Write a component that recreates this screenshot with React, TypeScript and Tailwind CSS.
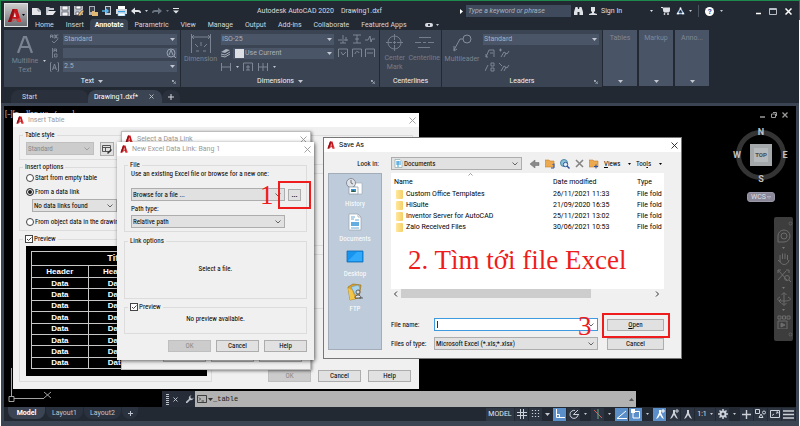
import type { ReactNode } from 'react';
import clsx from 'clsx';

const RIBBON_TABS = ['Home', 'Insert', 'Annotate', 'Parametric', 'View', 'Manage', 'Output', 'Add-ins', 'Collaborate', 'Featured Apps'];
const FOLDERS = [
  { name: 'Custom Office Templates', date: '26/11/2021 11:33' },
  { name: 'HiSuite', date: '21/09/2020 16:35' },
  { name: 'Inventor Server for AutoCAD', date: '25/11/2021 13:02' },
  { name: 'Zalo Received Files', date: '30/06/2021 10:53' },
];
const DATA_ROWS = ['Data', 'Data', 'Data', 'Data', 'Data', 'Data', 'Data', 'Data'];

type Cls = { className?: string };

/* ---------- small shared drawings ---------- */

function Svg({ w, h = w, className, children }: Cls & { w: number; h?: number; children: ReactNode }) {
  return (
    <svg width={w} height={h} viewBox={`0 0 ${w} ${h}`} fill="none" stroke="currentColor" className={clsx('shrink-0', className)}>
      {children}
    </svg>
  );
}

function Caret({ className = 'text-[#c3c8d0]' }: Cls) {
  return <Svg w={5} h={3} className={className}><path d="M0 0h5L2.5 3z" fill="currentColor" stroke="none" /></Svg>;
}

function SmallCaret({ className = 'text-[#c3c8d0]' }: Cls) {
  return <Svg w={3} h={2} className={className}><path d="M0 0h3L1.5 2z" fill="currentColor" stroke="none" /></Svg>;
}

function Chevron({ className = 'text-[#555]' }: Cls) {
  return <Svg w={6} h={4} className={className}><path d="M.5.5 3 3 5.5.5" strokeWidth=".9" /></Svg>;
}

function ALogo({ size }: { size: number }) {
  return (
    <svg width={size} height={size} viewBox="0 0 16 16" className="shrink-0">
      <path d="M1 15 6 1h5l4 14h-4l-1-3.5H6L4.500 15z" fill="#c4161c" />
      <path d="M7 9.500 8.400 4.500 9.600 9.500z" fill="#f6e4e4" />
      <path d="M1 15 6 1h2L4.500 15z" fill="#8f1015" />
      <path d="M4.500 15 14 10l1 5h-4l-1-2.500-3.500 0z" fill="#e03a3a" />
    </svg>
  );
}

function CloseX({ className = 'text-[#777]' }: Cls) {
  return <Svg w={7} className={className}><path d="m.5.5 6 6m0-6-6 6" strokeWidth=".9" /></Svg>;
}

/* ---------- title bar ---------- */

function QuickAccess() {
  return (
    <div className="flex items-center gap-1 pl-1 text-[#e4e6ea]">
      <button aria-label="New"><Svg w={10}><path d="M0 2h6l3 3v4H0z" fill="currentColor" stroke="none" /><path d="M6 2v3h3" stroke="#8a919c" /></Svg></button>
      <button aria-label="Open"><Svg w={10}><path d="M0 9V1h3l1 1h4v2H3z" fill="#bfc4cc" stroke="none" /><path d="M2 5h8L7 9H0z" fill="currentColor" stroke="none" /></Svg></button>
      <button aria-label="Save"><Svg w={10}><path d="M0 0h10v10H0z" fill="#b9bec7" stroke="none" /><path d="M2 0h6v4H2zM2 6h6v4H2z" fill="#f4f4f4" stroke="#4a5260" strokeWidth=".7" /></Svg></button>
      <button aria-label="Save As"><Svg w={10}><path d="M0 0h9v9H0z" fill="#b9bec7" stroke="none" /><path d="M2 0h5v3H2zM2 6h3v3H2z" fill="#fff" stroke="#4a5260" strokeWidth=".7" /><path d="m4 9 4-5 2 1-4 5z" fill="#f0c070" stroke="#5a4630" strokeWidth=".6" /></Svg></button>
      <button aria-label="Open from mobile"><Svg w={10}><path d="M1 0h6v9H1z" fill="#aab0ba" stroke="none" /><path d="M2 1h4v5H2z" fill="#3a4250" stroke="none" /><path d="M4 5h2l1 1h3v4H4z" fill="#e2b874" stroke="none" /></Svg></button>
      <button aria-label="Save to mobile"><Svg w={10}><path d="M3 0h6v9H3z" fill="#c8ccd4" stroke="none" /><path d="M4 1h4v6H4z" fill="#3a4250" stroke="none" /><path d="M0 5h6M4 3l2 2-2 2" stroke="#5ab4ea" strokeWidth="1.4" /></Svg></button>
      <button aria-label="Plot"><Svg w={11} h={10}><path d="M2 0h7v3H2z" fill="#fff" stroke="none" /><path d="M0 3h11v5H0z" fill="#d4d8de" stroke="none" /><path d="M2 5h7v1H2z" fill="#39a0e0" stroke="none" /><path d="M2 7h7v3H2z" fill="#fff" stroke="#69b7e8" strokeWidth=".6" /></Svg></button>
      <button aria-label="Undo"><Svg w={10} h={8}><path d="M0 4 4 .5V3h3c2 0 3 1 3 3H8.500C8.500 5 8 5 7 5H4v2.500z" fill="currentColor" stroke="none" /></Svg></button>
      <SmallCaret />
      <button aria-label="Redo"><Svg w={10} h={8} className="text-[#6b7482]"><path d="M10 4 6 .5V3H3C1 3 0 4 0 6h1.500C1.500 5 2 5 3 5h3v2.500z" fill="currentColor" stroke="none" /></Svg></button>
      <SmallCaret className="text-[#6b7482]" />
      <button aria-label="Customize toolbar"><Svg w={6}><path d="M0 .5h6" /><path d="M0 2.500h6l-3 3z" fill="currentColor" stroke="none" /></Svg></button>
    </div>
  );
}

function TitleBar() {
  return (
    <div className="flex h-4 items-center">
      <div className="w-[229px] shrink-0"><QuickAccess /></div>
      <h1 className="flex grow items-center gap-[7px] text-[#d8dbe0]"><span>Autodesk AutoCAD 2020</span><span>Drawing1.dxf</span></h1>
      <div className="flex items-center gap-[3px]">
        <Svg w={3} h={5} className="text-white"><path d="M0 0v5l3-2.500z" fill="currentColor" stroke="none" /></Svg>
        <input aria-label="Search" placeholder="Type a keyword or phrase" className="h-3 w-[105px] bg-[#3f4a5c] px-0.5 italic text-white placeholder:text-[#aab1bd]" />
      </div>
      <div className="flex w-[225px] shrink-0 items-center pl-[3px] text-[#dfe2e6]">
        <button aria-label="Find" className="mr-[6px]"><Svg w={9} h={8}><path d="M0 5 1.500 0h2l.5 2h1l.5-2h2L9 5v3H5.500V5h-2v3H0z" fill="currentColor" stroke="none" /></Svg></button>
        <button className="flex items-center gap-1"><Svg w={8}><path d="M2 0h4v4L5 5v1l3 1v1H0V7l3-1V5L2 4z" fill="currentColor" stroke="none" /></Svg>Sign In</button>
        <SmallCaret className="mr-2 ml-[28px]" />
        <button aria-label="Store" className="mr-[6px]"><Svg w={9} h={8}><path d="M0 .5h2L3 5h5l1-4H2.500" fill="currentColor" /><circle cx="3.500" cy="7" r=".6" fill="currentColor" /><circle cx="7" cy="7" r=".6" fill="currentColor" /></Svg></button>
        <button aria-label="Autodesk 360" className="mr-1"><Svg w={9} h={8}><path d="m4.500 1.500 3 5h-6z" stroke="#9fc0e8" strokeWidth="1.4" /><path d="M4.500.5v2M1 6.500h2M6 6.500h2" stroke="#fff" strokeWidth="1.5" /></Svg></button>
        <SmallCaret />
        <span className="mx-[6px] h-3 w-px bg-[#4a5362]" />
        <button aria-label="Help" className="mr-[6px] flex size-[9px] items-center justify-center rounded-full bg-white text-[8px] leading-[9px] font-bold text-[#1f4a9c]">?</button>
        <SmallCaret />
        <div className="ml-auto flex items-center gap-2 pr-1 text-white">
          <button aria-label="Minimize"><Svg w={5} h={8}><path d="M0 6.500h5" strokeWidth="1.5" /></Svg></button>
          <button aria-label="Maximize"><Svg w={8} h={7}><path d="M.5.5h7v6h-7zM.5 1.500h7" stroke="#b9bec7" /></Svg></button>
          <button aria-label="Close"><Svg w={7}><path d="m.5.5 6 6m0-6-6 6" strokeWidth="1.5" /></Svg></button>
        </div>
      </div>
    </div>
  );
}

function RibbonTabs() {
  return (
    <nav className="flex h-[11px] items-stretch pl-px text-[#d3d7dd]">
      {RIBBON_TABS.map((tab) => (
        <button key={tab} className={clsx('rounded-t-sm', tab === 'Annotate' ? 'bg-[#3b4453] px-[5px] font-bold text-white' : 'px-[6px]')}>{tab}</button>
      ))}
      <button aria-label="Ribbon display" className="flex items-center gap-[3px] pl-3">
        <span className="flex h-1 w-2 items-center justify-center rounded-xs bg-[#d8dbe0]"><i className="size-0.5 bg-[#3b4453]" /></span>
        <SmallCaret />
      </button>
    </nav>
  );
}

/* ---------- ribbon ---------- */

function RibbonSelect({ label, value, className, children }: Cls & { label: string; value: string; children?: ReactNode }) {
  return (
    <div className={clsx('relative flex h-[11px] items-center bg-[#4a5568] text-[#a8b0bd]', className)}>
      {children}
      <select aria-label={label} className="h-full grow appearance-none px-px opacity-100 outline-none"><option>{value}</option></select>
      <span className="pointer-events-none absolute top-1 right-0.5 flex"><Caret /></span>
    </div>
  );
}

function Panel({ title, className, caret, launcher, children }: Cls & { title: string; caret?: boolean; launcher?: boolean; children: ReactNode }) {
  return (
    <section className={clsx('flex shrink-0 flex-col bg-[#3b4453]', className)}>
      <div className="flex h-[46px] gap-1 px-[3px] pt-1">{children}</div>
      <footer className="relative flex h-[11px] items-center justify-center gap-1 text-[#f0f2f5]">
        {title}
        {caret && <Caret />}
        {launcher && <span className="absolute top-1 right-1"><Svg w={4} className="text-[#aab1bd]"><path d="M0 .5h2M.5 0v2M1 1l2 2M4 1v3H1" strokeWidth=".8" /></Svg></span>}
      </footer>
    </section>
  );
}

function Ghost({ d, w = 11, h = 10, label }: { d: string; w?: number; h?: number; label: string }) {
  return <button aria-label={label} className="text-[#848d9b]"><Svg w={w} h={h}><path d={d} strokeWidth=".9" /></Svg></button>;
}

function CollapsedPanel({ title }: { title: string }) {
  return (
    <button className="flex w-[34px] shrink-0 flex-col items-center justify-between bg-[#4a5467] pt-1 pb-[3px] text-[#7f8896]">
      {title}
      <Caret />
    </button>
  );
}

function Ribbon() {
  return (
    <div className="flex h-[57px] gap-px pl-px leading-[9px]">
      <Panel title="Text" caret launcher className="w-[176px]">
        <button className="relative flex w-[36px] flex-col items-center pt-0.5 text-[#7a8391]">
          <Svg w={16} h={17}><path d="M1 17 7 1h2l6 16M4 11h8" strokeWidth="2.2" /></Svg>
          <span className="pt-1">Multiline<br />Text</span>
          <span className="absolute right-[-3px] bottom-[14px]"><SmallCaret /></span>
        </button>
        <div className="flex w-3 flex-col items-end justify-between pb-1 text-[#848d9b]">
          <Svg w={9} h={10}><path d="M.5 4V1h2v3M.5 2.500h2M4 4V1h1.500v3zM8.500 1h-2v3h2M2 7l2 2 4-4" strokeWidth=".8" /></Svg>
          <Svg w={9} h={10}><path d="M2.500 0v10M4 4V1h2.500v3M4 2.500h2.500M4.500 9V6H7v3z" strokeWidth=".8" /></Svg>
          <Svg w={9} h={10}><path d="M.5 1v8M8.500 1v8M.5.5h1M.5 9.500h1M7.500.5h1M7.500 9.500h1M2.500 8l2-6 2 6M3 6h3" strokeWidth=".9" /></Svg>
        </div>
        <div className="flex grow flex-col gap-[3px] pb-1">
          <RibbonSelect label="Text style" value="Standard" />
          <div className="flex h-[11px] items-center bg-[#4a5568]">
            <input aria-label="Find text" className="h-full w-full min-w-0 grow px-0.5 outline-none" />
            <Svg w={11} h={10} className="text-[#98a1b0]"><circle cx="5" cy="5" r="4" /><path d="m3 7 2-5 2 5M8 8l2 2" /></Svg>
          </div>
          <RibbonSelect label="Text height" value="2.5" />
        </div>
      </Panel>

      <Panel title="Dimensions" caret launcher className="w-[198px]">
        <button className="flex w-[33px] flex-col items-center text-[#7a8391]">
          <Svg w={20} h={19}><path d="M.5 0v19M19.500 0v19M1 3h18M3 1 1 3l2 2M17 1l2 2-2 2M10 8v4M4 10l3 3M16 10l-3 3M5 17h3M12 17h3" /></Svg>
          <span className="pt-0.5">Dimension</span>
        </button>
        <div className="flex w-[117px] flex-col gap-[3px]">
          <RibbonSelect label="Dimension style" value="ISO-25" />
          <div className="flex items-center gap-[3px]">
            <Svg w={9}><path d="m0 3 5-3 4 1-5 3z" fill="#aab1bd" stroke="none" /><path d="m0 5 4 1 5-3M0 7l4 1 5-3" stroke="#aab1bd" /></Svg>
            <RibbonSelect label="Layer" value="Use Current" className="grow"><i className="ml-0.5 size-[9px] shrink-0 bg-[#dcdfe3]" /></RibbonSelect>
          </div>
          <div className="flex items-center gap-1">
            <Ghost label="Linear" d="M.5 1v8M9.500 1v8M.5 5h9" />
            <SmallCaret />
            <Ghost label="Quick" d="M.5 9V1h9v8M5 3v5M3 5h4M3 8h4" />
            <Ghost label="Continue" d="M.5 1v8M5 1v8M9.500 1v8M.5 5h9" />
            <SmallCaret />
          </div>
        </div>
        <div className="grid grid-cols-3 content-start gap-x-[3px] gap-y-1">
          <Ghost label="Break" d="M5 1v8M0 6h4M6 6h4M8 3v4M2 9h6" />
          <Ghost label="Space" d="M1 1h8M1 9h8M5 1v8M3 5h4" />
          <Ghost label="Jog" d="M0 6h3l2-4 1 6 1-3h3" />
          <Ghost label="Check" d="M.5 9V1h9v8M3 4l2 3 3-3" />
          <Ghost label="Update" d="M.5 9V1h9v8M3 6c0-3 4-3 4-1" />
          <Ghost label="Reassociate" d="M.5 9V1h9v8M2 5h6" />
        </div>
      </Panel>

      <Panel title="Centerlines" className="w-[61px]">
        <button className="flex w-1/2 flex-col items-center text-[#747d8b]">
          <Svg w={17}><circle cx="8.500" cy="8.500" r="6.500" /><path d="M8.500 0v6M8.500 7v3M8.500 11v6M0 8.500h6M7 8.500h3M11 8.500h6" /></Svg>
          <span className="pt-[3px]">Center<br />Mark</span>
        </button>
        <button className="flex w-1/2 flex-col items-center text-[#747d8b]">
          <Svg w={19} h={17}><path d="M4 3.500h12M0 8.500h6M8 8.500h3M13 8.500h6M3 13.500h12" /></Svg>
          <span className="pt-[3px]">Centerline</span>
        </button>
      </Panel>

      <Panel title="Leaders" launcher className="w-[160px]">
        <button className="flex w-[34px] flex-col items-center text-[#848d9b]">
          <Svg w={20} h={18}><circle cx="15" cy="5" r="4" /><path d="M11 5H8L2 16M2 12v5l3-2" /></Svg>
          <span className="pt-[3px] text-[#7a8391]">Multileader</span>
        </button>
        <div className="flex grow flex-col gap-[3px]">
          <RibbonSelect label="Leader style" value="Standard" />
          <div className="grid grid-cols-[12px_12px] gap-x-0.5 gap-y-1 pl-0.5">
            <Ghost label="Align" d="M1 9 4 2h5v7M5 5h3M1 6v3h2" />
            <Ghost label="Add leader" d="M0 2h3M1.500.5v3M2 9l3-5 3 2 2-3M5 9l2-4" />
            <Ghost label="Collect" d="M0 9 3 3M6 1h3v3H6zM6 6h3v3H6z" />
            <Ghost label="Remove leader" d="M0 1l3 3M2 9l3-5 3 2 2-3M5 9l2-4" />
          </div>
        </div>
      </Panel>
      <div className="flex gap-0.5 pb-px">
        <CollapsedPanel title="Tables" />
        <CollapsedPanel title="Markup" />
        <CollapsedPanel title="Anno..." />
      </div>
    </div>
  );
}

/* ---------- dialog pieces ---------- */

function Dialog({ title, muted, className, children }: Cls & { title: string; muted?: boolean; children?: ReactNode }) {
  return (
    <section role="dialog" aria-label={title} className={clsx("absolute flex flex-col bg-[#f0f0f0] font-['Roboto_Condensed'] text-black", className)}>
      <header className="flex h-[14px] shrink-0 items-center gap-1 bg-white px-[3px]">
        <ALogo size={8} />
        <h2 className={clsx("grow font-['Roboto']", muted ? 'text-[#9a9a9a]' : 'text-black')}>{title}</h2>
        <button aria-label={`Close ${title}`}><CloseX className={muted ? 'text-[#999]' : 'text-[#222]'} /></button>
      </header>
      {children}
    </section>
  );
}

function Group({ title, className, children }: Cls & { title?: ReactNode; children?: ReactNode }) {
  return (
    <fieldset className={clsx('min-w-0 border border-[#dcdcdc] px-[6px]', className)}>
      {title && <legend className="-ml-[3px] px-0.5">{title}</legend>}
      {children}
    </fieldset>
  );
}

function WinButton({ children, disabled, className = 'h-3 w-[43px]' }: Cls & { children: ReactNode; disabled?: boolean }) {
  return (
    <button disabled={disabled} className={clsx('shrink-0 border', className, disabled ? 'border-[#bfbfbf] bg-[#cccccc] text-[#8a8a8a]' : 'border-[#adadad] bg-[#e1e1e1] text-black')}>
      {children}
    </button>
  );
}

function WinSelect({ label, value, disabled, className, children }: Cls & { label: string; value: string; disabled?: boolean; children?: ReactNode }) {
  return (
    <div className={clsx('relative flex h-[13px] items-center border px-px', disabled ? 'border-[#bfbfbf] bg-[#cccccc] text-[#888]' : 'border-[#adadad] bg-[#e1e1e1]', className)}>
      {children}
      <select aria-label={label} disabled={disabled} className="h-full w-full min-w-0 appearance-none opacity-100 outline-none"><option>{value}</option></select>
      <span className="pointer-events-none absolute top-1 right-[3px] flex"><Chevron className={disabled ? 'text-[#999]' : 'text-[#555]'} /></span>
    </div>
  );
}

function Radio({ label, checked }: { label: string; checked?: boolean }) {
  return (
    <label className="flex items-center gap-px whitespace-nowrap">
      <input type="radio" name="insert" defaultChecked={checked} className="size-2 shrink-0 appearance-none rounded-full border border-[#444] bg-white checked:bg-[#222] checked:shadow-[inset_0_0_0_1px_white]" />
      {label}
    </label>
  );
}

function PreviewCheck() {
  return (
    <label className="flex items-center gap-px">
      <span className="relative flex size-2">
        <input type="checkbox" defaultChecked className="size-2 appearance-none border border-[#444] bg-white" />
        <span className="pointer-events-none absolute inset-0"><Svg w={8}><path d="m2 4 1.500 1.500L6.500 2.500" stroke="#333" strokeWidth=".9" /></Svg></span>
      </span>
      Preview
    </label>
  );
}

/* ---------- dialogs ---------- */

function InsertTableDialog() {
  return (
    <Dialog title="Insert Table" muted className="top-[7px] left-[9px] h-[276px] w-[406px]">
      <div className="flex grow px-[6px] pt-1">
        <div className="w-[193px]">
          <Group title="Table style" className="h-[29px]">
            <div className="flex gap-[6px] pt-[3px]">
              <WinSelect label="Table style" value="Standard" disabled className="w-[68px]" />
              <button aria-label="Edit table style" className="flex h-[14px] w-[14px] items-center justify-center border border-[#adadad] bg-[#e1e1e1]">
                <Svg w={10}><path d="M.5 1.500h8v6h-8zM.5 3.500h8M3.500 3.500v4" stroke="#555" /><path d="m5 9 4-4 1 1-4 4z" fill="#333" stroke="none" /></Svg>
              </button>
            </div>
          </Group>
          <Group title="Insert options" className="mt-[3px] h-[68px]">
            <div className="flex flex-col gap-[6px] pt-[3px]">
              <Radio label="Start from empty table" />
              <Radio label="From a data link" checked />
            </div>
            <WinSelect label="Data link" value="No data links found" className="mt-[3px] ml-[6px] w-[85px]" />
            <div className="pt-[6px]"><Radio label="From object data in the drawing (Data Extraction)" /></div>
          </Group>
          <Group title={<PreviewCheck />} className="mt-1 h-[147px] px-[5px] pt-[3px]">
            <div className="h-[130px] w-[181px] bg-black p-[5px] font-['Liberation_Sans'] text-[8px] font-bold text-white">
              <table className="h-[118px] w-full table-fixed border-collapse text-center leading-[9px] [&_td]:border [&_td]:border-[#c8c8c8] [&_td]:p-0 [&_th]:border [&_th]:border-[#c8c8c8] [&_th]:p-0">
                <thead>
                  <tr className="h-[14px] text-[9px]"><th colSpan={3}>Title</th></tr>
                  <tr className="h-3"><th>Header</th><th>Header</th><th>Header</th></tr>
                </thead>
                <tbody>
                  {DATA_ROWS.map((cell, i) => <tr key={i}><td>{cell}</td><td>{cell}</td><td>{cell}</td></tr>)}
                </tbody>
              </table>
            </div>
          </Group>
        </div>
        <div className="flex grow flex-col gap-2 pt-1">
          <Group className="h-[30px]" />
          <Group className="h-[73px]" />
          <Group className="h-[55px]" />
          <div className="mt-auto flex justify-end gap-[7px] px-0.5 pb-[7px]">
            <WinButton disabled>OK</WinButton>
            <WinButton>Cancel</WinButton>
            <WinButton>Help</WinButton>
          </div>
        </div>
      </div>
    </Dialog>
  );
}

function SelectLinkDialog() {
  return (
    <Dialog title="Select a Data Link" muted className="top-[25px] left-[117px] h-[239px] w-[190px] border border-[#bdbdbd] shadow-[1px_1px_3px_rgba(0,0,0,0.5)]">
      <div className="mt-auto flex justify-end gap-[5px] px-2 pb-[7px]">
        <WinButton>OK</WinButton>
        <WinButton>Cancel</WinButton>
        <WinButton>Help</WinButton>
      </div>
    </Dialog>
  );
}

function NewLinkDialog() {
  return (
    <Dialog title="New Excel Data Link: Bang 1" muted className="top-[36px] left-[113px] h-[218px] w-[197px] shadow-[1px_1px_4px_rgba(0,0,0,0.6)]">
      <div className="flex grow flex-col px-[7px] pt-[5px]">
        <Group title="File" className="h-[71px] pr-[5px]">
          <p className="pt-px">Use an existing Excel file or browse for a new one:</p>
          <div className="flex items-center gap-[3px] pt-[10px]">
            <WinSelect label="File" value="Browse for a file ..." className="w-[154px]" />
            <WinButton className="h-3 w-[13px] leading-[8px] font-bold">...</WinButton>
          </div>
          <p className="pt-1 pb-0.5">Path type:</p>
          <WinSelect label="Path type" value="Relative path" className="w-[154px]" />
        </Group>
        <Group title="Link options" className="mt-[5px] h-[62px]"><p className="pt-5 text-center">Select a file.</p></Group>
        <Group title={<PreviewCheck />} className="mt-1 h-[31px]"><p className="pt-1 text-center">No preview available.</p></Group>
        <div className="flex justify-end gap-[5px] pt-[6px]">
          <WinButton disabled>OK</WinButton>
          <WinButton>Cancel</WinButton>
          <WinButton>Help</WinButton>
        </div>
      </div>
    </Dialog>
  );
}

function PlaceIcon({ name }: { name: string }) {
  if (name === 'History') return (
    <Svg w={18} h={18}>
      <path d="M8 5h8v11h-5z" fill="#fff" stroke="#9aa5b0" strokeWidth=".6" /><circle cx="5" cy="5" r="4.500" fill="#dfe3e8" stroke="#858f9a" />
      <path d="M5 5V2M5 5l2 1" stroke="#555" strokeWidth=".8" /><path d="M3 9h9v7H3z" fill="#fff" stroke="#8895a5" strokeWidth=".7" /><path d="M5 11h5v3H5z" fill="#3a92cf" stroke="none" /><path d="M5 14l2-2 3 2z" fill="#305f46" stroke="none" />
    </Svg>
  );
  if (name === 'Documents') return (
    <Svg w={18} h={18}>
      <path d="M3 1h9l3 3v13H3z" fill="#fff" stroke="#9aa5b0" strokeWidth=".7" /><path d="M5 4h4M5 6h3M9 7h4M5 15h8" stroke="#6da9d6" /><path d="M5 9h8v4H5z" fill="#65ade0" stroke="none" /><path d="M12 1v3h3" stroke="#9aa5b0" strokeWidth=".7" />
    </Svg>
  );
  if (name === 'Desktop') return <Svg w={18} h={18}><path d="M1 3h16v11H1z" fill="#1994ee" stroke="#0c6cb8" strokeWidth=".8" /><path d="m2 13 9-9h5v9z" fill="#32aafb" stroke="none" /></Svg>;
  return (
    <Svg w={18} h={18}>
      <path d="m2 4 5-3 8 1-2 13-9 2z" fill="#d9a430" stroke="#9c7420" strokeWidth=".7" /><path d="m5 4 7-2 2 3-4 8z" fill="#a8d4ee" stroke="#6c93ac" strokeWidth=".6" />
      <path d="m2 5 4 2 3 9-5 1z" fill="#f2c648" stroke="none" /><circle cx="12" cy="9" r="2" stroke="#444" fill="#ddd" strokeWidth=".8" /><path d="M9 15c0-4 6-4 6 0zM13 15h4" stroke="#444" fill="#e5e5e5" strokeWidth=".8" />
    </Svg>
  );
}

function SaveAsDialog() {
  return (
    <Dialog title="Save As" className="top-[31px] left-[319px] h-[222px] w-[359px] border border-[#777]">
      <div className="flex h-[22px] items-center px-[6px] pt-0.5">
        <span className="w-[49px] text-right">Look in:</span>
        <WinSelect label="Look in" value="Documents" className="ml-3 w-[131px]">
          <Svg w={9} className="mx-px"><path d="M1 .5h5l2 2v6H1z" fill="#fff" stroke="#8aa" strokeWidth=".7" /><path d="M2 3h5M2 5h5M4 2v6" stroke="#2f9ad8" /></Svg>
        </WinSelect>
        <div className="ml-2 flex items-center gap-[5px]">
          <button aria-label="Back"><Svg w={10}><path d="M0 5 5 1v2.500h4v3H5V9z" fill="#8a8a8a" stroke="#666" strokeWidth=".5" /></Svg></button>
          <button aria-label="Up one level"><Svg w={10}><path d="M0 1h4l1 1h4v6H0z" fill="#eda94f" stroke="#c9822c" strokeWidth=".6" /><path d="M6 9h3V5M7.500 6 9 4.500" stroke="#2a52a0" /></Svg></button>
          <button aria-label="Search the Web"><Svg w={10}><circle cx="4" cy="4" r="3.500" fill="#8cc1d9" stroke="#4c87a4" /><circle cx="5.500" cy="5.500" r="2.200" fill="#dceefa" stroke="#315a9a" /><path d="m7 7 2.500 2.500" stroke="#2a52a0" strokeWidth="1.4" /></Svg></button>
          <button aria-label="Delete"><Svg w={9}><path d="m1 1 7 7m0-7L1 8" stroke="#858585" strokeWidth="1.6" /></Svg></button>
          <button aria-label="Create folder"><Svg w={10}><path d="M0 1h4l1 1h4v6H0z" fill="#eda94f" stroke="#c9822c" strokeWidth=".6" /><path d="M5 7.500h4M7 5.500v4" stroke="#2a52a0" /></Svg></button>
          <button className="flex w-[27px] items-center justify-between"><span><u>V</u>iews</span><SmallCaret className="text-black" /></button>
          <button className="flex w-[26px] items-center justify-between"><span>Too<u>l</u>s</span><SmallCaret className="text-black" /></button>
        </div>
      </div>
      <div className="flex grow gap-[9px] px-1 pb-2">
        <nav className="flex w-[54px] shrink-0 flex-col gap-[5px] border border-[#a2adb9] bg-[#bdcbda] pt-1">
          {['History', 'Documents', 'Desktop', 'FTP'].map((p) => (
            <button key={p} className="flex flex-col items-center gap-1 text-white"><PlaceIcon name={p} />{p}</button>
          ))}
        </nav>
        <div className="flex grow flex-col">
          <div className="relative mr-[13px] h-[116px] overflow-hidden bg-white pt-[3px] font-['Roboto']">
            <span className="absolute top-0 left-[77px]"><Svg w={5} h={3} className="text-[#777]"><path d="m.5 2.500 2-2 2 2" strokeWidth=".7" /></Svg></span>
            <table className="w-full table-fixed text-left leading-[11px] [&_td]:p-0 [&_th]:p-0 [&_th]:font-normal">
              <colgroup><col className="w-[158px]" /><col className="w-[84px]" /><col /></colgroup>
              <thead><tr className="h-[13px]"><th><span className="pl-[3px]">Name</span></th><th><span className="pl-1">Date modified</span></th><th><span className="pl-1">Type</span></th></tr></thead>
              <tbody>
                {FOLDERS.map((f) => (
                  <tr key={f.name} className="whitespace-nowrap">
                    <td>
                      <span className="flex items-center gap-[3px] pl-[5px]">
                        <i className="h-[9px] w-[7px] rounded-[1px] bg-linear-to-r from-[#ffe79b] to-[#f5d069]" />
                        {f.name}
                      </span>
                    </td>
                    <td><span className="pl-1">{f.date}</span></td>
                    <td><span className="pl-1">File fold</span></td>
                  </tr>
                ))}
              </tbody>
            </table>
          </div>
          <div className="mr-[13px] flex h-[9px] items-center bg-[#f0f0f0]">
            <Svg w={10} h={6}><path d="M6 .5 3.500 3 6 5.500" stroke="#333" /></Svg>
            <i className="h-full w-[190px] bg-[#cdcdcd]" />
            <Svg w={6} className="ml-auto mr-[3px]"><path d="M1 .5 3.500 3 1 5.500" stroke="#333" /></Svg>
          </div>
          <div className="grid grid-cols-[37px_164px_57px] items-center gap-x-[6px] gap-y-[6px] pt-5">
            <label htmlFor="file-name">File name:</label>
            <div className="relative h-[13px] border border-[#3f9be0] bg-white">
              <input id="file-name" className="h-full w-full px-1 outline-none" />
              <i className="absolute top-0.5 left-0.5 h-[7px] w-px bg-[#333]" />
              <span className="pointer-events-none absolute top-1 right-[3px] flex"><Chevron /></span>
            </div>
            <WinButton className="ml-[3px] h-3 w-[57px]"><u>O</u>pen</WinButton>
            <span className="whitespace-nowrap">Files of type:</span>
            <WinSelect label="Files of type" value='Microsoft Excel (*.xls;*.xlsx)' />
            <WinButton className="ml-[3px] h-3 w-[57px]">Cancel</WinButton>
          </div>
        </div>
      </div>
    </Dialog>
  );
}

/* ---------- drawing area ---------- */

function ViewCube() {
  return (
    <div className="absolute top-5 right-0 w-[70px]">
      <svg width="70" height="66" viewBox="0 0 70 66" className="font-['Roboto'] text-[9px] font-bold">
        <circle cx="35" cy="29" r="22.500" fill="none" stroke="#343434" strokeWidth="5" />
        <rect x="24" y="18" width="22" height="22" fill="#a4a8aa" />
        <rect x="28" y="22" width="14" height="14" fill="#b6babc" />
        <text x="35" y="31" textAnchor="middle" fill="#454b50" className="text-[6px]">TOP</text>
        <g fill="#c2c2c2" textAnchor="middle"><text x="35" y="9">N</text><text x="35" y="56">S</text><text x="11" y="32">W</text><text x="59" y="32">E</text></g>
      </svg>
      <button className="mx-auto flex h-[10px] w-[28px] items-center justify-between rounded-[3px] border border-[#9a97a8] bg-[#8a8798] px-[3px] text-[#dedee4]">WCS<Svg w={4} h={3} className="text-[#c5c3cf]"><path d="M0 .5h4l-2 2z" strokeWidth=".6" /></Svg></button>
    </div>
  );
}

function NavBar() {
  return (
    <div className="absolute top-[111px] right-[3px] flex h-[124px] w-[19px] flex-col items-center justify-between rounded-xs bg-[#3d3d3d] py-1 text-[#6c6c6c]">
      <Svg w={5} className="self-end"><circle cx="2.500" cy="2.500" r="1.500" strokeWidth=".7" /></Svg>
      <Svg w={14}><path d="M1 13V7a6 6 0 1 1 6 6z" /><circle cx="7" cy="7" r="3" /></Svg>
      <SmallCaret className="text-[#777]" />
      <Svg w={14}><path d="M3 8V3M5.500 7V1.500M8 7V1.500M10.500 8V3M3 8c0 6 8 6 9 0M3 10 1 8" /></Svg>
      <Svg w={14}><path d="m1 1 9 10M1 11 9 2M1 4V1h3M9 1h3v3" /><circle cx="10" cy="9" r="2.500" /><path d="m12 11 2 2" /></Svg>
      <SmallCaret className="text-[#777]" />
      <Svg w={14}><path d="M7 1v12M4.500 3 7 .5 9.500 3M4.500 11 7 13.500 9.500 11M3 5C-1 7 0 9 7 9s8-2 4-4M4 7 2 9l2 2" /></Svg>
      <SmallCaret className="text-[#777]" />
      <Svg w={14}><path d="M1 1h3v3H1zM5.500 1h3v3h-3zM10 1h3v3h-3zM1 6h9v8H1z" /><path d="m4 8 4 2-4 2z" fill="currentColor" /></Svg>
      <Svg w={5} className="self-end"><circle cx="2.500" cy="2.500" r="1.500" strokeWidth=".7" /></Svg>
    </div>
  );
}

function Canvas() {
  return (
    <main className="relative grow overflow-hidden bg-black">
      <p className="absolute top-[5px] left-px text-[#cfcfcf]">[−][Top][2D Wireframe]</p>
      <div className="absolute top-[6px] right-2 flex gap-[5px] text-[#9a9a9a]">
        <Svg w={6}><path d="M0 5h5" strokeWidth="1.5" /></Svg>
        <Svg w={6}><path d="M.5 2h4v3.500h-4zM2 .5h3.500V4" /></Svg>
        <Svg w={6}><path d="m.5.5 5 5m0-5-5 5" strokeWidth="1.3" /></Svg>
      </div>
      <ViewCube />
      <NavBar />
      <div className="absolute bottom-[3px] left-[3px] text-[#b5b5b5]">
        <Svg w={46} h={36}><path d="M4.500 0v28M7 30.500h30M2 28.500h5v5H2zM37 24l7 6m0-6-7 6" strokeWidth=".9" /></Svg>
      </div>
      <div className="absolute right-[160px] bottom-0 left-[158px] flex h-4 items-center bg-[#b2b2b2] font-['Liberation_Mono'] text-[#222]">
        <div className="flex h-full w-[33px] shrink-0 items-center gap-1 bg-[#272d38] pl-1 text-[#bfc4cc]">
          <Svg w={3} h={11}><path d="M1.500 0v11" strokeWidth="3" strokeDasharray="1 1" /></Svg>
          <Svg w={5}><path d="m.5.5 4 4m0-4-4 4" /></Svg>
          <Svg w={8} className="ml-1"><path d="m0 8 4-4" strokeWidth="1.7" /><path d="M7.500 2.500 6 4 4 2 5.500.5A2.500 2.500 0 0 0 3 4l1 1a2.500 2.500 0 0 0 3.500-2.500z" fill="currentColor" stroke="none" /></Svg>
        </div>
        <Svg w={10} h={8} className="mr-px ml-0.5"><path d="M.5.5h9v7h-9zM2 2.500 3.500 4 2 5.500M4.500 6H7" strokeWidth=".8" /></Svg>
        <Caret className="text-[#333]" />
        <input aria-label="Command line" defaultValue="_table" className="min-w-0 grow outline-none" />
        <Svg w={5} h={3} className="mr-0.5 text-[#555]"><path d="M0 3h5L2.500 0z" fill="currentColor" stroke="none" /></Svg>
      </div>
      <InsertTableDialog />
      <SelectLinkDialog />
      <NewLinkDialog />
      <SaveAsDialog />
      <div className="pointer-events-none font-['Liberation_Serif'] text-[27px] leading-7 text-[#ee1c1c]">
        <span className="absolute top-[75px] left-[274px] h-[28px] w-[33px] border-2" />
        <span className="absolute top-[75px] left-[256px]">1</span>
        <span className="absolute top-[140px] left-[404px] whitespace-nowrap">2. Tìm tới file Excel</span>
        <span className="absolute top-[206px] left-[574px]">3</span>
        <span className="absolute top-[207px] left-[598px] h-[25px] w-[68px] border-2" />
      </div>
    </main>
  );
}

/* ---------- status bar ---------- */

function Tool({ label, on, children }: { label: string; on?: boolean; children: ReactNode }) {
  return <button aria-label={label} className={clsx('flex h-[13px] w-[13px] items-center justify-center', on ? 'bg-[#5b8fca] text-white' : 'bg-[#2c3442] text-[#cdd1d8]')}>{children}</button>;
}

function Person({ mark }: { mark?: string }) {
  return <Svg w={10}><path d="m1 10 3-6 0-3 2 0 0 3 3 6-2-1-2-3-2 3z" fill="currentColor" stroke="none" />{mark && <path d={mark} strokeWidth="1" />}</Svg>;
}

function StatusBar() {
  return (
    <footer className="flex h-[14px] items-center bg-[#222933] pl-1">
      <div className="flex h-full items-stretch gap-px pb-0.5 text-[#c0c5cd]">
        <button className="w-[37px] rounded-b-lg bg-[#3b4453] font-bold text-white">Model</button>
        <button className="w-[37px] rounded-b-lg bg-[#2a323f]">Layout1</button>
        <button className="w-[37px] rounded-b-lg bg-[#2a323f]">Layout2</button>
        <button aria-label="New layout" className="flex w-4 items-center justify-center rounded-b-lg bg-[#2a323f]"><Svg w={5}><path d="M2.500 0v5M0 2.500h5" /></Svg></button>
      </div>
      <div className="ml-auto flex items-center gap-px pr-px">
        <button className="h-[13px] w-[28px] bg-[#2f3845] text-[#e6e8ec]">MODEL</button>
        <Tool label="Grid"><Svg w={10}><path d="M3.500 0v10M6.500 0v10M0 3.500h10M0 6.500h10" /></Svg></Tool>
        <Tool label="Snap"><Svg w={9}><path d="M1.500 0v9M4.500 0v9M7.500 0v9" strokeDasharray="1 2" strokeWidth="1.2" /></Svg></Tool>
        <span className="flex w-[9px] justify-center"><Caret /></span>
        <Tool label="Ortho" on><Svg w={10}><path d="M1.500 0v8.500H10M1.500 5.500h3v3" /></Svg></Tool>
        <Tool label="Polar"><Svg w={10}><path d="M9 5a4 4 0 1 1-3-3.500M4.500 5.500 9 1M4.500 5.500H10" /></Svg></Tool>
        <span className="flex w-[9px] justify-center"><SmallCaret /></span>
        <Tool label="Isodraft"><Svg w={10}><path d="m1 1 8 8" stroke="#d0605e" /><path d="M5 0v10" stroke="#69a886" /></Svg></Tool>
        <span className="flex w-[9px] justify-center"><SmallCaret /></span>
        <Tool label="Tracking" on><Svg w={11} h={9}><path d="M10 1 1 8.500h10" /></Svg></Tool>
        <Tool label="Object snap" on><Svg w={10}><path d="M2 2.500h6.500V9H2z" /><path d="M0 0h4v4H0z" fill="currentColor" stroke="none" /></Svg></Tool>
        <span className="flex w-[9px] justify-center"><SmallCaret /></span>
        <Tool label="Annotation visibility" on><Person mark="M7 1h2v2H7z" /></Tool>
        <Tool label="Auto scale"><Person mark="M8 0v4M6 2h4" /></Tool>
        <Tool label="Annotation scale"><Person /></Tool>
        <button className="flex h-[13px] w-[20px] items-center justify-center gap-[3px] bg-[#2c3442] text-[#dfe2e6]">1:1<SmallCaret /></button>
        <Tool label="Workspace"><Svg w={10}><circle cx="5" cy="5" r="2.500" strokeWidth="2" /><path d="M5 0v2M5 8v2M0 5h2M8 5h2M1.500 1.500l1.500 1.500M7 7l1.500 1.500M8.500 1.500 7 3M3 7 1.500 8.500" strokeWidth="1.5" /></Svg></Tool>
        <span className="flex w-[9px] justify-center"><SmallCaret /></span>
        <Tool label="Monitor"><Svg w={9}><path d="M4.500 0v9M0 4.500h9" strokeWidth="1.4" /></Svg></Tool>
        <Tool label="Isolate"><Svg w={11} h={10}><path d="M.5.5h4v4h-4zM4 8.500 6 5l2 3.500z" /><circle cx="9" cy="3.500" r="1.500" /></Svg></Tool>
        <Tool label="Clean screen"><Svg w={10} h={8}><path d="M.5.5h9v7h-9zM2 5.500 4 4M6 3.500 8 2M6.500 2H8v1.500" /></Svg></Tool>
        <Tool label="Customization"><Svg w={11} h={9}><path d="M0 1h11M0 4.500h11M0 8h11" strokeWidth="1.4" /></Svg></Tool>
      </div>
    </footer>
  );
}

/* ---------- page ---------- */

export default function App() {
  return (
    <div className="flex min-h-screen border-t border-[#1d8a4c] bg-white bg-[linear-gradient(#1a7f45,#1a7f45)] bg-[length:100%_19px] bg-no-repeat px-px font-['Roboto'] text-[7px] leading-[8px]">
      <div className="flex min-h-full grow flex-col border-b-[5px] border-[#3b4453] bg-[#222933]">
        <header className="flex px-[3px]">
          <button aria-label="Application menu" className="mt-0.5 flex h-6 w-6 shrink-0 items-center justify-center border border-[#e2e2e2] bg-linear-to-b from-[#cdcdcd] to-[#6c6f74]">
            <ALogo size={15} /><SmallCaret className="text-black" />
          </button>
          <div className="grow pt-0.5"><TitleBar /><RibbonTabs /></div>
        </header>
        <div className="px-[2px]"><Ribbon /></div>
        <nav className="flex h-[16px] items-end pl-[10px] text-[#d5d8dd]">
          <button className="h-[13px] w-[77px] rounded-t-lg bg-[#2a313d] pl-[11px] text-left">Start</button>
          <button className="flex h-[13px] w-[74px] items-center justify-between rounded-t-lg bg-[#3b4453] pr-2 pl-[6px] text-white">Drawing1.dxf*<Svg w={5} className="text-[#b5bac3]"><path d="m.5.5 4 4m0-4-4 4" /></Svg></button>
          <button aria-label="New drawing" className="flex h-[13px] w-[18px] items-center justify-center rounded-t-lg bg-[#2a313d]"><Svg w={6}><path d="M3 0v6M0 3h6" /></Svg></button>
        </nav>
        <div className="h-[3px] bg-[#3b4453]" />
        <div className="flex grow flex-col border-x-[3px] border-[#3b4453]">
          <Canvas />
          <StatusBar />
        </div>
      </div>
    </div>
  );
}
